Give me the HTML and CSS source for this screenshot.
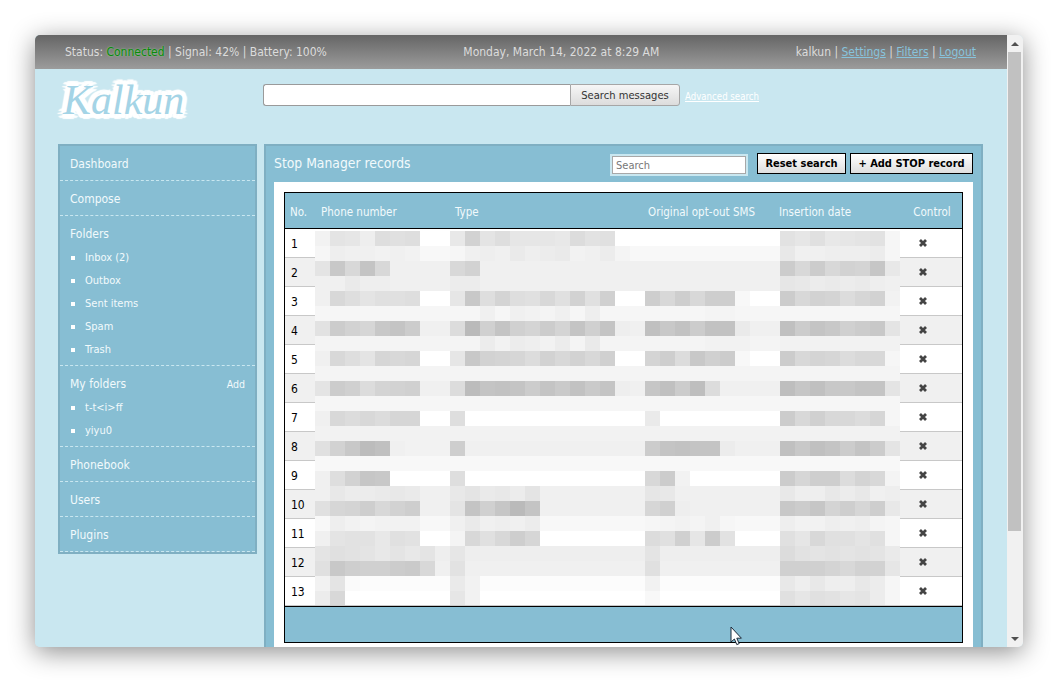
FILE: index.html
```html
<!DOCTYPE html>
<html lang="en">
<head>
<meta charset="utf-8">
<title>Kalkun - Stop Manager</title>
<link rel="stylesheet" href="styles.css">
</head>
<body>
<div class="window">
  <div class="viewport">
    <header class="topbar">
      <div class="top-left">Status: <span class="connected">Connected</span> | Signal: 42% | Battery: 100%</div>
      <div class="top-mid">Monday, March 14, 2022 at 8:29 AM</div>
      <div class="top-right">kalkun | <a href="#">Settings</a> | <a href="#">Filters</a> | <a href="#">Logout</a></div>
    </header>
    <div class="masthead">
      <div class="logo">Kalkun</div>
      <form class="site-search">
        <input class="site-input" type="text">
        <button class="site-btn" type="button">Search messages</button>
        <a class="advanced" href="#">Advanced search</a>
      </form>
    </div>
    <div class="columns">
      <nav class="sidebar">
        <a class="nav-item" href="#">Dashboard</a>
        <a class="nav-item" href="#">Compose</a>
        <div class="nav-group">
          <div class="nav-head">Folders</div>
          <ul class="nav-list">
            <li>Inbox (2)</li>
            <li>Outbox</li>
            <li>Sent items</li>
            <li>Spam</li>
            <li>Trash</li>
          </ul>
        </div>
        <div class="nav-group">
          <div class="nav-head">My folders <span class="nav-add">Add</span></div>
          <ul class="nav-list">
            <li>t-t&lt;i&gt;ff</li>
            <li>yiyu0</li>
          </ul>
        </div>
        <a class="nav-item" href="#">Phonebook</a>
        <a class="nav-item" href="#">Users</a>
        <a class="nav-item" href="#">Plugins</a>
      </nav>
      <main class="panel">
        <div class="panel-head">
          <h1 class="panel-title">Stop Manager records</h1>
          <div class="panel-tools">
            <span class="search-frame"><input class="search-input" type="text" placeholder="Search"></span>
            <button class="tool-btn btn-reset" type="button">Reset search</button>
            <button class="tool-btn btn-add" type="button">+ Add STOP record</button>
          </div>
        </div>
        <div class="panel-body">
          <div class="table-wrap">
            <table class="records">
              <colgroup>
                <col class="c-no"><col class="c-phone"><col class="c-type"><col class="c-sms"><col class="c-date"><col class="c-ctl">
              </colgroup>
              <thead>
                <tr><th>No.</th><th class="th-phone">Phone number</th><th>Type</th><th>Original opt-out SMS</th><th>Insertion date</th><th class="th-ctl">Control</th></tr>
              </thead>
              <tbody>
                <tr><td>1</td><td></td><td></td><td></td><td></td><td class="ctl"><svg class="x" viewBox="0 0 10 10"><path d="M2 2l6 6M8 2l-6 6"/></svg></td></tr>
                <tr><td>2</td><td></td><td></td><td></td><td></td><td class="ctl"><svg class="x" viewBox="0 0 10 10"><path d="M2 2l6 6M8 2l-6 6"/></svg></td></tr>
                <tr><td>3</td><td></td><td></td><td></td><td></td><td class="ctl"><svg class="x" viewBox="0 0 10 10"><path d="M2 2l6 6M8 2l-6 6"/></svg></td></tr>
                <tr><td>4</td><td></td><td></td><td></td><td></td><td class="ctl"><svg class="x" viewBox="0 0 10 10"><path d="M2 2l6 6M8 2l-6 6"/></svg></td></tr>
                <tr><td>5</td><td></td><td></td><td></td><td></td><td class="ctl"><svg class="x" viewBox="0 0 10 10"><path d="M2 2l6 6M8 2l-6 6"/></svg></td></tr>
                <tr><td>6</td><td></td><td></td><td></td><td></td><td class="ctl"><svg class="x" viewBox="0 0 10 10"><path d="M2 2l6 6M8 2l-6 6"/></svg></td></tr>
                <tr><td>7</td><td></td><td></td><td></td><td></td><td class="ctl"><svg class="x" viewBox="0 0 10 10"><path d="M2 2l6 6M8 2l-6 6"/></svg></td></tr>
                <tr><td>8</td><td></td><td></td><td></td><td></td><td class="ctl"><svg class="x" viewBox="0 0 10 10"><path d="M2 2l6 6M8 2l-6 6"/></svg></td></tr>
                <tr><td>9</td><td></td><td></td><td></td><td></td><td class="ctl"><svg class="x" viewBox="0 0 10 10"><path d="M2 2l6 6M8 2l-6 6"/></svg></td></tr>
                <tr><td>10</td><td></td><td></td><td></td><td></td><td class="ctl"><svg class="x" viewBox="0 0 10 10"><path d="M2 2l6 6M8 2l-6 6"/></svg></td></tr>
                <tr><td>11</td><td></td><td></td><td></td><td></td><td class="ctl"><svg class="x" viewBox="0 0 10 10"><path d="M2 2l6 6M8 2l-6 6"/></svg></td></tr>
                <tr><td>12</td><td></td><td></td><td></td><td></td><td class="ctl"><svg class="x" viewBox="0 0 10 10"><path d="M2 2l6 6M8 2l-6 6"/></svg></td></tr>
                <tr><td>13</td><td></td><td></td><td></td><td></td><td class="ctl"><svg class="x" viewBox="0 0 10 10"><path d="M2 2l6 6M8 2l-6 6"/></svg></td></tr>
              </tbody>
              <tfoot>
                <tr><td colspan="6"></td></tr>
              </tfoot>
            </table>
            <canvas class="mosaic" id="mosaic" width="585" height="374"></canvas>
          </div>
        </div>
      </main>
    </div>
  </div>
  <div class="scrollbar">
    <span class="arrow-up"></span>
    <div class="track"><div class="thumb"></div></div>
    <span class="arrow-down"></span>
  </div>
  <svg class="cursor" viewBox="0 0 13 20"><path d="M1 1v15l3.4-3 2.4 5.6 2.4-1-2.4-5.4h4.6z"/></svg>
</div>
<script src="mosaic.js"></script>
</body>
</html>
```
FILE: styles.css
```css
* { box-sizing: border-box; }
html, body { margin: 0; height: 100%; overflow: hidden; }
body {
  background: #fff;
  padding: 35px;
  font-family: "DejaVu Sans Condensed", "DejaVu Sans", sans-serif;
  font-stretch: condensed;
  font-size: 12px;
}
.window {
  position: relative;
  width: 988px;
  height: 612px;
  display: flex;
  border-radius: 5px;
  box-shadow: 0 5px 26px rgba(0, 0, 0, .45);
  overflow: hidden;
  background: #c9e7f0;
}
.viewport { width: 972px; flex: none; overflow: hidden; background: #c9e7f0; }

.topbar {
  height: 34px;
  padding: 0 31px 0 30px;
  display: flex;
  justify-content: space-between;
  align-items: center;
  color: #dcdcdc;
  background: linear-gradient(#656565, #9c9c9c);
}
.connected { color: #0a8a0a; text-shadow: 0 0 2px #9fd89f; }
.top-right a { color: #87c3dc; }

.masthead { height: 75px; display: flex; padding-left: 28px; }
.logo {
  width: 200px;
  padding-top: 3px;
  font: italic 42px/56px "Liberation Serif", serif;
  color: #a4d4e6;
  text-shadow: 5px 0 1px #fff, -5px 0 1px #fff, 0 5px 1px #fff, 0 -5px 1px #fff,
    4px 3px 1px #fff, -4px 3px 1px #fff, 4px -3px 1px #fff, -4px -3px 1px #fff,
    3px 4px 1px #fff, -3px 4px 1px #fff, 3px -4px 1px #fff, -3px -4px 1px #fff;
}
.site-search { display: flex; align-items: flex-start; padding-top: 15px; }
.site-input {
  width: 307px; height: 22px;
  border: 1px solid #9a9a9a; border-right: 0;
  border-radius: 3px 0 0 3px; background: #fff; outline: 0;
}
.site-btn {
  width: 110px; height: 22px; padding: 1px 0 0;
  border: 1px solid #a6a6a6; border-radius: 0 3px 3px 0;
  background: linear-gradient(#f6f6f6, #dcdcdc);
  color: #333; font: inherit; font-size: 11.1px;
}
.advanced { margin: 7px 0 0 5px; color: #fff; font-size: 9.6px; }

.columns { display: flex; align-items: flex-start; gap: 7px; padding-left: 23px; }
.sidebar {
  width: 199px; flex: none;
  border: 2px solid #7fafc2;
  background: #87bed3;
  color: #f2fafc;
}
.nav-item {
  display: block; height: 35px;
  padding: 1px 0 0 10px;
  line-height: 34px;
  color: #f2fafc; text-decoration: none;
  border-bottom: 1px dashed #c9e7f0;
}
.nav-group { padding: 11px 10px 4px; border-bottom: 1px dashed #c9e7f0; }
.nav-head { line-height: 15px; margin-bottom: 4px; display: flex; justify-content: space-between; }
.nav-add { font-size: 10.5px; }
.nav-list { list-style: none; margin: 0; padding: 0; }
.nav-list li { position: relative; height: 23px; line-height: 23px; padding-left: 15px; font-size: 11px; }
.nav-list li::before {
  content: ""; position: absolute; left: 1px; top: 10px;
  width: 4px; height: 4px; background: #fff;
}

.panel {
  width: 719px; flex: none;
  border: 2px solid #7fafc2; border-bottom: 0;
  background: #87bed3;
  padding: 0 8px;
}
.panel-head { height: 36px; display: flex; justify-content: space-between; }
.panel-title { margin: 0; font-size: 13.8px; line-height: 34px; font-weight: normal; color: #f2fafc; }
.panel-tools { display: flex; align-items: flex-start; gap: 4px; padding-top: 7px; }
.search-frame { display: block; width: 138px; height: 22px; margin: 1px 5px 0 0; border: 2px solid #c9e7f0; }
.search-input {
  display: block; width: 134px; height: 18px; padding: 1px 3px 0;
  border: 1px solid #a8a8a8; background: #fff; outline: 0;
  font: inherit; font-size: 11px;
}
.search-input::placeholder { color: #777; opacity: 1; }
.tool-btn {
  height: 21px; padding: 0;
  border: 1px solid #000;
  background: linear-gradient(#fff, #dedede);
  color: #000; font: inherit; font-size: 11px; font-weight: bold;
  white-space: nowrap;
}
.btn-reset { width: 89px; }
.btn-add { width: 123px; }
.panel-body { background: #fff; padding: 10px 10px 4px; }
.table-wrap { position: relative; }
.records {
  width: 679px; table-layout: fixed;
  border-collapse: separate; border-spacing: 0;
  border: 1px solid #000;
}
.c-no { width: 30px; } .c-phone { width: 135px; } .c-type { width: 193px; }
.c-sms { width: 131px; } .c-date { width: 126px; } .c-ctl { width: 62px; }
.records th {
  height: 36px; padding: 2px 0 0 5px;
  background: #87bed3; color: #f2fafc;
  text-align: left; font-weight: normal; font-size: 11.5px;
  border-bottom: 1px solid #000;
}
.records th.th-phone { padding-left: 6px; }
.records th.th-ctl { padding: 2px 0 0 2px; text-align: center; }
.records tbody td {
  height: 29px; padding: 1px 0 0 6px;
  border-bottom: 1px solid #c8c8c8;
  color: #000; background: #fff;
}
.records tbody tr:nth-child(even) td { background: #f0f0f0; }
.records tbody td.ctl { padding: 0 0 0 18px; }
.x { display: block; width: 10px; height: 10px; stroke: #444; stroke-width: 2.8; fill: none; }
.records tfoot td { height: 36px; padding: 0; background: #87bed3; border-top: 1px solid #000; }
.mosaic { position: absolute; left: 31px; top: 39px; display: block; }

.scrollbar { width: 16px; flex: none; display: flex; flex-direction: column; align-items: center; background: #f1f1f1; }
.arrow-up, .arrow-down { flex: none; width: 0; height: 0; border-left: 4px solid transparent; border-right: 4px solid transparent; }
.arrow-up { margin: 7px 0 6px; border-bottom: 4px solid #505050; }
.arrow-down { margin: 6px 0 6px; border-top: 4px solid #505050; }
.track { flex: 1; width: 100%; padding: 0 2px 0 1px; }
.thumb { height: 479px; background: #c1c1c1; }

.cursor {
  position: absolute; left: 695px; top: 591px;
  width: 13px; height: 20px;
  fill: #fff; stroke: #1a2a3a; stroke-width: 1;
}
```
FILE: mosaic.js
```js
// Pixelated (redacted) cells of the table: one character per 15px block.
// Base-36 digit n gives grey level 184 + 2n; "." is white.
var rows = [
  "tmnrjkj..odmjnnnoilk" + "..........." + "lnkonmlv",
  "vrsststwwvsrsprqptsq" + "uwwwwwwwwww" + "ossrrrqv",
  "m8g6gssssgdsssssssss" + "sssssssssss" + "agagde7o",
  "ssprrssssqqsssssssss" + "sssssssssss" + "noqpqprs",
  "sgjmkkj..n8jejkgkdkc" + "..bgbgbbw.." + "agdeifdt",
  "vvvvvvvvvvvsvstusvrv" + "vvvvvvuuvvv" + "vvvvvvvv",
  "ladf86assi1c6ceae6c6" + "rs485a55pss" + "4a68ca8m",
  "uuuuuuuuuuuqtqrtqupu" + "uuuuuutttuu" + "tttttttt",
  "sgjmfgf..n8defidgdgc" + "..ebi8caw.." + "agefiggv",
  "uuuuuuuuuuuuuuuuuuuu" + "uuuuuuuuuuu" + "uuuuuuuu",
  "maciedcssi2656a69596" + "rs74a3issss" + "3748866m",
  "vvvvvvvvvvvvvvvvvvvv" + "vvvvvvvvvvv" + "vvvvvvvv",
  "sgigiff..j.........." + "..p........" + "agcggifv",
  "tttttttttttttttttttt" + "ttttttttttt" + "tttttttt",
  "kd824stttbssssssssss" + "ssa6566qsss" + "4846a6am",
  "wwwwwwwwwwwwwwwwwwww" + "wwwwwwwwwww" + "wwwwwwww",
  "sjd78....j.........." + "..gat......" + "afbbiegu",
  "soqqpopssompoqmsssss" + "ssnosssssss" + "orroqosr",
  "kfebgdbssm6c716sssss" + "ssfcrssssss" + "8a7ebfbo",
  "wrtutttwwspsrsqwwwww" + "wwvutusvwww" + "rttrsruv",
  "smllokl..ugkgbf....." + "..ikcnal..." + "kngkkmkv",
  "mklmomomrnrrrrrrrrrr" + "rrmrrrrrrrr" + "ilmlmlmp",
  "k8bcca9gslssssssssss" + "sskssssssss" + "cccegddn",
  "tmxyyyyyyptyyyyyyyyy" + "yytyyyyyyyy" + "ororroqv",
  "qg.......nt........." + "..w........" + "knklnmqv"
];
var ctx = document.getElementById("mosaic").getContext("2d");
rows.forEach(function (row, y) {
  for (var x = 0; x < row.length; x++) {
    var c = row.charAt(x);
    var g = c === "." ? 255 : 184 + 2 * parseInt(c, 36);
    ctx.fillStyle = "rgb(" + g + "," + g + "," + g + ")";
    ctx.fillRect(x * 15, y * 15, 15, 15);
  }
});
```
